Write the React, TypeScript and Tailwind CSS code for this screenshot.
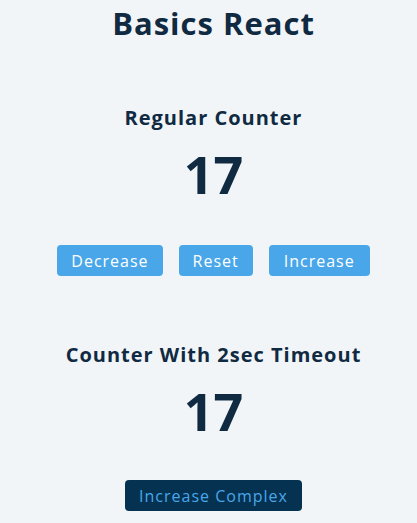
import { useState } from 'react'

const font = { fontFamily: '"Open Sans", "Noto Sans", sans-serif' }

function RegularCounter() {
  const [value, setValue] = useState(17)
  return (
    <section className="mt-[59px] flex flex-col items-center">
      <h2 className="text-[20px] font-bold tracking-[1px] text-[#102a42]">Regular Counter</h2>
      <h1 className="mt-[11px] text-[52px] font-bold leading-[60px] text-[#102a42]">{value}</h1>
      <div className="mt-[41px] flex gap-4">
        <button
          type="button"
          onClick={() => setValue(value - 1)}
          className="h-[31px] rounded-[4px] bg-[#49a6e9] px-[14px] text-[16px] tracking-[1px] text-white"
        >
          Decrease
        </button>
        <button
          type="button"
          onClick={() => setValue(0)}
          className="h-[31px] rounded-[4px] bg-[#49a6e9] px-[14px] text-[16px] tracking-[1px] text-white"
        >
          Reset
        </button>
        <button
          type="button"
          onClick={() => setValue(value + 1)}
          className="h-[31px] rounded-[4px] bg-[#49a6e9] px-[15px] text-[16px] tracking-[1px] text-white"
        >
          Increase
        </button>
      </div>
    </section>
  )
}

function TimeoutCounter() {
  const [value, setValue] = useState(17)
  function complexIncrease() {
    setTimeout(() => setValue((v) => v + 1), 2000)
  }
  return (
    <section className="mt-[64px] flex flex-col items-center">
      <h2 className="text-[20px] font-bold tracking-[1px] text-[#102a42]">Counter With 2sec Timeout</h2>
      <h1 className="mt-[11px] text-[52px] font-bold leading-[60px] text-[#102a42]">{value}</h1>
      <button
        type="button"
        onClick={complexIncrease}
        className="mt-[39px] h-[31px] rounded-[4px] bg-[#063251] px-[14px] text-[16px] tracking-[1px] text-[#49a6e9]"
      >
        Increase Complex
      </button>
    </section>
  )
}

export default function App() {
  return (
    <div style={font} className="min-h-[523px] bg-[#f1f5f8] pl-[10px] pt-[2px]">
      <h1 className="text-center text-[31px] font-bold leading-[42px] tracking-[1px] text-[#102a42]">Basics React</h1>
      <RegularCounter />
      <TimeoutCounter />
    </div>
  )
}
